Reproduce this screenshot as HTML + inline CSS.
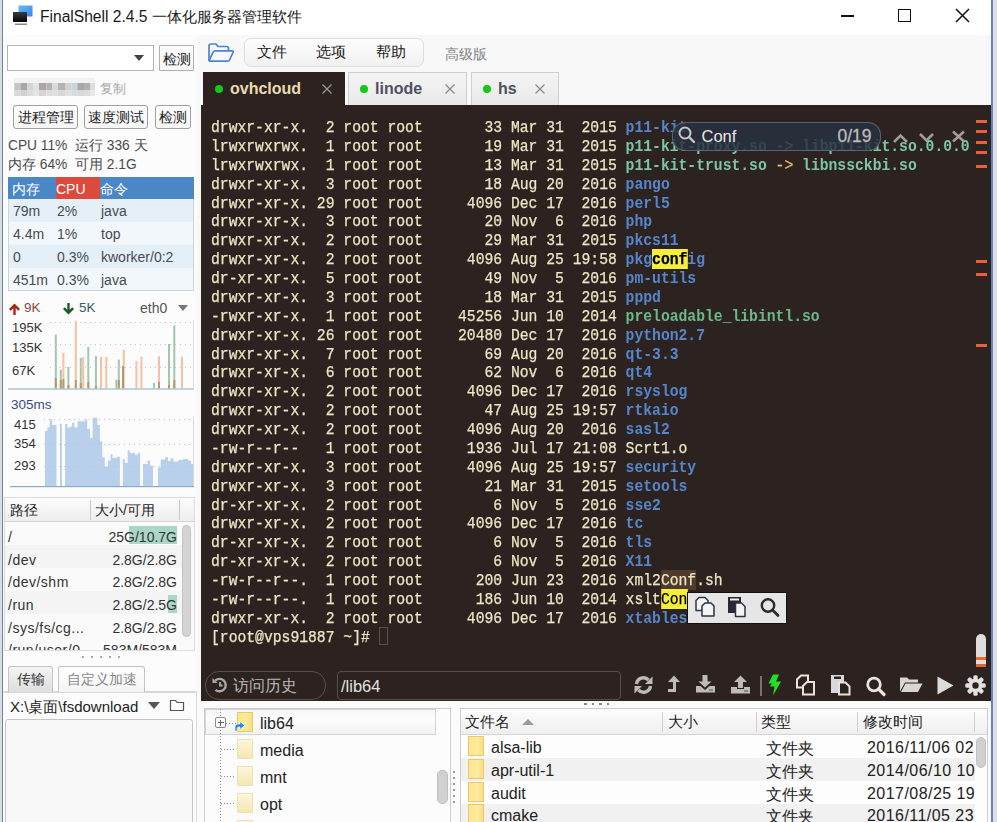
<!DOCTYPE html>
<html><head><meta charset="utf-8">
<style>
*{box-sizing:border-box}
html,body{margin:0;padding:0}
body{width:997px;height:822px;overflow:hidden;position:relative;background:#f8f8f8;font-family:"Liberation Sans",sans-serif;color:#333}
.a{position:absolute}
#title{left:0;top:0;width:997px;height:35px;background:#fff}
#term{left:201px;top:105px;width:790px;height:596px;background:#2c2220}
#tt{left:210.8px;top:119px;transform:scaleX(0.91875);transform-origin:0 0;font-family:"Liberation Mono",monospace;font-size:16px;line-height:18.87px;white-space:pre;color:#eee5c4;-webkit-text-stroke:0.25px currentColor}
.b{color:#5686cc;font-weight:bold;-webkit-text-stroke:0}
.g{color:#6cb888;font-weight:bold;-webkit-text-stroke:0}
.c{color:#7cc6a6;font-weight:bold;-webkit-text-stroke:0}
.ar{color:#e6c07a}
.hy{background:#f5ee3c;color:#000;padding-top:2px}
.hb{background:#4e3b2c;padding-top:2px}

.btn{border:1px solid #a0a0a0;border-radius:3px;background:linear-gradient(#fefefe,#f6f6f6);font-size:14px;color:#222;text-align:center;line-height:23px;white-space:nowrap}
.ptab{left:0;width:200px;height:20px;font-size:14px;color:#474c52}
.ptab span{position:absolute;top:0;white-space:nowrap}

.dk{position:absolute;left:0;width:172px;height:20px;font-size:14px;color:#333;white-space:nowrap}
.dk .l{position:absolute;left:3px;top:0;letter-spacing:.5px}
.dk .r{position:absolute;right:0;top:0}
.tabb{height:26px;border:1px solid #c4c4c4;border-bottom:none;border-radius:3px 3px 0 0;font-size:14px;text-align:center;line-height:24px;white-space:nowrap}

.lbl{font-size:13px;color:#333}
.dot{width:8px;height:8px;border-radius:50%;background:#14c814}
.tabt{top:80px;font-size:16px;font-weight:bold;white-space:nowrap}

.mk{left:976px;width:11px;height:3px;background:#e8603a}
.fold{width:15.5px;height:20px;background:linear-gradient(90deg,#fde68c,#feeaa0 60%,#f9df84);border-radius:0;border:1px solid #ecc968}
.fold.pale{background:linear-gradient(#fdf6dc,#f6e6b0);border-color:#f1e2b4}
.tn{font-size:16px;color:#222;white-space:nowrap}
.hd{top:713px;font-size:15px;color:#222;white-space:nowrap}
.fr{left:0;width:997px;height:20px;font-size:16px;color:#222}
.fr .dt{letter-spacing:.45px}
.fr span{position:absolute;top:0;white-space:nowrap}
</style></head><body>
<div id="title" class="a"></div>
<div class="a" style="left:3px;top:35px;width:194px;height:787px;background:#fcfcfc"></div>
<div class="a" style="left:2px;top:0;width:1px;height:822px;background:#5f86cc"></div>
<div class="a" style="left:0;top:0;width:2px;height:822px;background:#dcdcdc"></div>
<div class="a" style="left:991px;top:0;width:2px;height:822px;background:#5f86cc"></div>
<div class="a" style="left:993px;top:0;width:4px;height:822px;background:#e2dede"></div>


<!-- title bar content -->
<svg class="a" style="left:11px;top:4px" width="24" height="24" viewBox="0 0 24 24">
  <defs><linearGradient id="gb" x1="0" y1="0" x2="1" y2="1"><stop offset="0" stop-color="#6fb6f5"/><stop offset="1" stop-color="#2f8ae8"/></linearGradient>
  <linearGradient id="gm" x1="0" y1="0" x2="0" y2="1"><stop offset="0" stop-color="#3a3a44"/><stop offset="1" stop-color="#050505"/></linearGradient></defs>
  <rect x="7.5" y="1.5" width="14" height="11" fill="url(#gb)"/>
  <rect x="2" y="8" width="14" height="10" fill="url(#gm)"/>
  <rect x="4" y="19.5" width="12" height="1.5" fill="#8a8a8a"/>
</svg>
<div class="a" style="left:40px;top:8px;font-size:15px;color:#1a1a1a;white-space:nowrap"><span style="font-size:15.6px">FinalShell 2.4.5 </span>一体化服务器管理软件</div>
<div class="a" style="left:841px;top:15px;width:13px;height:1.5px;background:#111"></div>
<div class="a" style="left:898px;top:9px;width:13px;height:13px;border:1.3px solid #111"></div>
<svg class="a" style="left:955px;top:8px" width="15" height="15" viewBox="0 0 15 15"><path d="M1 1L14 14M14 1L1 14" stroke="#111" stroke-width="1.5"/></svg>

<!-- left panel -->
<div class="a" style="left:7px;top:44.5px;width:147px;height:26.5px;border:1.5px solid #b4b4b4;background:#fff"></div>
<div class="a" style="left:134px;top:55px;width:0;height:0;border-left:5.5px solid transparent;border-right:5.5px solid transparent;border-top:6px solid #444"></div>
<div class="a btn" style="left:159px;top:44.5px;width:35px;height:26px;line-height:27px;border-radius:1px;border:1.5px solid #b0b0b0">检测</div>
<svg class="a" style="left:14px;top:78px;filter:blur(0.6px)" width="82" height="20" viewBox="0 0 82 20"><rect x="0" y="0" width="81" height="5" fill="#f2f2f2"/><rect x="0.3" y="5" width="6.1" height="7" fill="#c4c4c4"/><rect x="0.3" y="12" width="6.1" height="6" fill="#d8d8d8"/><rect x="6.4" y="5" width="6.6" height="7" fill="#a8a8a4"/><rect x="6.4" y="12" width="6.6" height="6" fill="#d0d0d0"/><rect x="13.0" y="5" width="6.0" height="7" fill="#d4d4d4"/><rect x="13.0" y="12" width="6.0" height="6" fill="#dcdcdc"/><rect x="19.0" y="5" width="6.0" height="7" fill="#e0e4e8"/><rect x="19.0" y="12" width="6.0" height="6" fill="#e4e4e4"/><rect x="25.0" y="5" width="7.4" height="7" fill="#b0a4a8"/><rect x="25.0" y="12" width="7.4" height="6" fill="#d4d4d4"/><rect x="32.4" y="5" width="5.6" height="7" fill="#b4b4b0"/><rect x="32.4" y="12" width="5.6" height="6" fill="#dcdcdc"/><rect x="38.0" y="5" width="6.0" height="7" fill="#d8dadc"/><rect x="38.0" y="12" width="6.0" height="6" fill="#e0e0e0"/><rect x="44.0" y="5" width="7.0" height="7" fill="#b4b4b4"/><rect x="44.0" y="12" width="7.0" height="6" fill="#d8d8d8"/><rect x="51.0" y="5" width="6.7" height="7" fill="#d4d0cc"/><rect x="51.0" y="12" width="6.7" height="6" fill="#e0e0e0"/><rect x="57.7" y="5" width="5.6" height="7" fill="#c8d4e0"/><rect x="57.7" y="12" width="5.6" height="6" fill="#d4dce4"/><rect x="63.3" y="5" width="6.7" height="7" fill="#a8a8a8"/><rect x="63.3" y="12" width="6.7" height="6" fill="#d8d8d8"/><rect x="70.0" y="5" width="6.0" height="7" fill="#b0b0b0"/><rect x="70.0" y="12" width="6.0" height="6" fill="#dcdcdc"/><rect x="76.0" y="5" width="5.0" height="7" fill="#dcdcdc"/><rect x="76.0" y="12" width="5.0" height="6" fill="#e8e8e8"/></svg>
<div class="a" style="left:100px;top:80px;font-size:13px;color:#a8a8a8">复制</div>
<div class="a btn" style="left:13px;top:105px;width:65px;height:24px">进程管理</div>
<div class="a btn" style="left:84px;top:105px;width:64px;height:24px">速度测试</div>
<div class="a btn" style="left:155px;top:105px;width:36px;height:24px">检测</div>
<div class="a" style="left:8px;top:135.5px;font-size:13.75px;color:#4a4a4a;white-space:pre;line-height:19px">CPU 11%  运行 336 天
内存 64%  可用 2.1G</div>
<!-- process table -->
<div class="a" style="left:8px;top:177px;width:186px;height:114px;border:1px solid #c8d4df;background:#f2f7fb"></div>
<div class="a" style="left:8px;top:177px;width:186px;height:22px;background:#4a87c6"></div>
<div class="a" style="left:56px;top:177px;width:44px;height:22px;background:#dc4a3c"></div>
<div class="a" style="left:9px;top:199px;width:184px;height:23px;background:#e5eff8"></div>
<div class="a" style="left:9px;top:245px;width:184px;height:23px;background:#e5eff8"></div>
<div class="a ptab" style="top:181px;color:#fff"><span style="left:12px">内存</span><span style="left:56px">CPU</span><span style="left:100px">命令</span></div>
<div class="a ptab" style="top:202.5px"><span style="left:13px">79m</span><span style="left:57px">2%</span><span style="left:101px">java</span></div>
<div class="a ptab" style="top:225.5px"><span style="left:13px">4.4m</span><span style="left:57px">1%</span><span style="left:101px">top</span></div>
<div class="a ptab" style="top:249px"><span style="left:13px">0</span><span style="left:57px">0.3%</span><span style="left:101px">kworker/0:2</span></div>
<div class="a ptab" style="top:272px"><span style="left:13px">451m</span><span style="left:57px">0.3%</span><span style="left:101px">java</span></div>


<!-- net -->
<svg class="a" style="left:8px;top:302px" width="13" height="13" viewBox="0 0 13 13"><path d="M6.5 1.5L1 7l1.8 1.8 2.5-2.5V13h2.4V6.3l2.5 2.5L12 7z" fill="#a82818"/></svg>
<div class="a" style="left:24px;top:300px;font-size:13.5px;color:#8e4646">9K</div>
<svg class="a" style="left:62px;top:302px" width="13" height="13" viewBox="0 0 13 13"><path d="M6.5 12.5L1 7l1.8-1.8 2.5 2.5V1h2.4v6.7l2.5-2.5L12 7z" fill="#1c5a30"/></svg>
<div class="a" style="left:79px;top:300px;font-size:13.5px;color:#3a5868">5K</div>
<div class="a" style="left:140px;top:299.5px;font-size:14px;color:#555">eth0</div>
<div class="a" style="left:178px;top:305px;width:0;height:0;border-left:5.5px solid transparent;border-right:5.5px solid transparent;border-top:6px solid #777"></div>
<svg class="a" style="left:0;top:0" width="200" height="500" viewBox="0 0 200 500"><rect x="54.8" y="334.5" width="2" height="54.2" fill="#a4c6ac"/><rect x="59.8" y="369.6" width="2" height="19.1" fill="#a4c6ac"/><rect x="67.4" y="367.0" width="2" height="21.7" fill="#a4c6ac"/><rect x="79.8" y="358.0" width="2" height="30.7" fill="#a4c6ac"/><rect x="87.3" y="347.0" width="2" height="41.7" fill="#a4c6ac"/><rect x="94.9" y="356.0" width="2" height="32.7" fill="#a4c6ac"/><rect x="115.4" y="379.7" width="2" height="9.0" fill="#a4c6ac"/><rect x="117.8" y="359.6" width="2" height="29.1" fill="#a4c6ac"/><rect x="153.0" y="383.0" width="2" height="5.7" fill="#a4c6ac"/><rect x="168.0" y="344.0" width="2" height="44.7" fill="#a4c6ac"/><rect x="173.3" y="325.5" width="2" height="63.2" fill="#a4c6ac"/><rect x="62.4" y="352.8" width="2" height="35.9" fill="#f7c0a2"/><rect x="74.8" y="321.0" width="2" height="67.7" fill="#f7c0a2"/><rect x="82.2" y="357.0" width="2" height="31.7" fill="#f7c0a2"/><rect x="100.0" y="356.8" width="2" height="31.9" fill="#f7c0a2"/><rect x="105.3" y="357.0" width="2" height="31.7" fill="#f7c0a2"/><rect x="122.8" y="349.6" width="2" height="39.1" fill="#f7c0a2"/><rect x="135.4" y="361.0" width="2" height="27.7" fill="#f7c0a2"/><rect x="140.4" y="356.8" width="2" height="31.9" fill="#f7c0a2"/><rect x="158.0" y="356.2" width="2" height="32.5" fill="#f7c0a2"/><rect x="181.0" y="356.8" width="2" height="31.9" fill="#f7c0a2"/><rect x="54.8" y="378.0" width="2" height="10.7" fill="#b49a6c"/><rect x="59.8" y="380.0" width="2" height="8.7" fill="#b49a6c"/><rect x="62.4" y="379.0" width="2" height="9.7" fill="#b49a6c"/><rect x="67.4" y="385.0" width="2" height="3.7" fill="#b49a6c"/><rect x="74.8" y="380.0" width="2" height="8.7" fill="#b49a6c"/><rect x="79.8" y="383.0" width="2" height="5.7" fill="#b49a6c"/><rect x="87.3" y="382.0" width="2" height="6.7" fill="#b49a6c"/><rect x="94.9" y="386.0" width="2" height="2.7" fill="#b49a6c"/><rect x="122.0" y="366.0" width="2" height="22.7" fill="#b49a6c"/><rect x="117.8" y="380.0" width="2" height="8.7" fill="#b49a6c"/><rect x="158.0" y="382.0" width="2" height="6.7" fill="#b49a6c"/><rect x="168.0" y="385.0" width="2" height="3.7" fill="#b49a6c"/><rect x="173.3" y="380.0" width="2" height="8.7" fill="#b49a6c"/><path d="M44.9 486.0V430.9H47.3V427.5H49.7V419.2H52.2V425H56.5V486.0ZM60 486.0V424.1H61.9V486.0ZM65.1 486.0V424.1H67.3V427.5H70.2V426.5H72.1V422.7H74.5V427.5H77.5V421.2H85.3V419.2H87.2V429H90.1V437.7H92.6V417.8H97.4V425H99.9V441.6H102.3V457.2H104.7V466.4H108.1V460.6H110.6V454.3H112.5V457.7H116.9V456.7H119.9V486.0ZM122.8 486.0V459.1H124.7V463H127.7V450.4H130.1V453.3H132.5V452.8H135V454.8H137.9V452.8H140.1V486.0ZM143 486.0V464H147.6V460.6H150V465.5H153V486.0ZM158 486.0V467.4H160.7V459.6H165.1V457.2H168V461.1H170.5V458.2H173.4V461.6H178.3V460.1H183.1V459.1H188V460.6H190.9V464H193.3V486.0Z" fill="#b8d0ec"/><rect x="193" y="417" width="1" height="69" fill="#d8d8d8"/><rect x="8" y="388.3" width="186" height="1.4" fill="#a9c3cf"/><rect x="10" y="486" width="184" height="1.2" fill="#8fa8c4"/><rect x="193" y="320" width="1" height="69" fill="#dde"/><g stroke="#c4c4c4" stroke-width="1" stroke-dasharray="1 4"><line x1="50" y1="322.5" x2="194" y2="322.5"/><line x1="50" y1="344.5" x2="194" y2="344.5"/><line x1="50" y1="367.5" x2="194" y2="367.5"/><line x1="44" y1="419.5" x2="194" y2="419.5"/><line x1="44" y1="444.5" x2="194" y2="444.5"/><line x1="44" y1="466.5" x2="194" y2="466.5"/></g></svg>
<div class="a lbl" style="left:12px;top:320px">195K</div><div class="a lbl" style="left:12px;top:340px">135K</div><div class="a lbl" style="left:12px;top:363px">67K</div>
<div class="a" style="left:11px;top:397px;font-size:13.5px;color:#3a4a86">305ms</div>
<div class="a lbl" style="left:14px;top:417px">415</div><div class="a lbl" style="left:14px;top:436px">354</div><div class="a lbl" style="left:14px;top:458px">293</div>
<!-- disk table -->
<div class="a" style="left:4px;top:497px;width:191px;height:154px;border:1px solid #dcdcdc;background:#fafafa"></div>
<div class="a" style="left:5px;top:498px;width:189px;height:24px;background:linear-gradient(#fbfbfb,#eeeeee);border-bottom:1px solid #d6d6d6"></div>
<div class="a" style="left:90px;top:500px;width:1px;height:20px;background:#c9c9c9"></div>
<div class="a" style="left:179px;top:500px;width:1px;height:20px;background:#c9c9c9"></div>
<div class="a" style="left:10px;top:502px;font-size:14px;color:#222">路径</div>
<div class="a" style="left:95px;top:502px;font-size:14px;color:#222">大小/可用</div>
<div class="a" style="left:5px;top:545px;width:177px;height:23px;background:#f4f4f4"></div>
<div class="a" style="left:5px;top:591px;width:177px;height:23px;background:#f4f4f4"></div>
<div class="a" style="left:129px;top:526px;width:48px;height:18px;background:#a9d6c6"></div>
<div class="a" style="left:168px;top:595px;width:9px;height:18px;background:#a9d6c6"></div>
<div class="a" style="left:182px;top:525px;width:9px;height:112px;border-radius:5px;background:#d4d4d4;border:1px solid #c4c4c4"></div>
<div class="a" style="left:5px;top:522px;width:176px;height:128px;overflow:hidden"><div style="position:absolute;left:0;top:1.5px;width:176px;height:128px">
 <div class="dk" style="top:5px"><span class="l">/</span><span class="r">25G/10.7G</span></div>
 <div class="dk" style="top:28px"><span class="l">/dev</span><span class="r">2.8G/2.8G</span></div>
 <div class="dk" style="top:50px"><span class="l">/dev/shm</span><span class="r">2.8G/2.8G</span></div>
 <div class="dk" style="top:73px"><span class="l">/run</span><span class="r">2.8G/2.5G</span></div>
 <div class="dk" style="top:96px"><span class="l">/sys/fs/cg...</span><span class="r">2.8G/2.8G</span></div>
 <div class="dk" style="top:118px"><span class="l">/run/user/0</span><span class="r">583M/583M</span></div>
</div></div>
<div class="a" style="left:82px;top:656px;width:40px;height:2px;background:repeating-linear-gradient(90deg,#aaa 0 2px,transparent 2px 9px)"></div>
<!-- transfer tabs -->
<div class="a" style="left:3px;top:691px;width:194px;height:2px;background:#d8d8d8"></div>
<div class="a" style="left:196px;top:692px;width:1px;height:130px;background:#dcdcdc"></div>
<div class="a tabb" style="left:8px;top:666px;width:45px;background:linear-gradient(#f4f4f4,#dedede);color:#333">传输</div>
<div class="a tabb" style="left:58px;top:666px;width:87px;background:linear-gradient(#fefefe,#f4f4f4);color:#888">自定义加速</div>
<div class="a" style="left:10px;top:697.5px;font-size:15px;color:#222;white-space:nowrap">X:\桌面\fsdownload</div>
<div class="a" style="left:148px;top:702px;width:0;height:0;border-left:6px solid transparent;border-right:6px solid transparent;border-top:7px solid #555"></div>
<svg class="a" style="left:169px;top:698px" width="16" height="14" viewBox="0 0 16 14"><path d="M1.5 2.5h5l1.5 2h6.5v8h-13z" fill="none" stroke="#555" stroke-width="1.2"/></svg>
<div class="a" style="left:5px;top:719px;width:188px;height:110px;border:1px solid #c6c6c6;border-radius:3px;background:#f8f8f8"></div>


<!-- toolbar -->
<svg class="a" style="left:207px;top:42px" width="28" height="22" viewBox="0 0 28 22"><path d="M2 18.5V4q0-2 2-2h5l2 2.5h8.5q2 0 2 2v2.2" fill="none" stroke="#4a84d8" stroke-width="1.7" stroke-linejoin="round"/><path d="M2 18.5l4.3-8.6q.5-1.1 1.8-1.1H25q1.8 0 1.1 1.6L22.5 18q-.5 1.1-1.7 1.1H2.6z" fill="none" stroke="#4a84d8" stroke-width="1.7" stroke-linejoin="round"/></svg>
<div class="a" style="left:244px;top:38px;width:180px;height:29px;border:1px solid #dedede;border-radius:7px;background:linear-gradient(#fdfdfd,#f1f1f1)"></div>
<div class="a" style="left:257px;top:43px;font-size:15px;color:#222">文件</div>
<div class="a" style="left:316px;top:43px;font-size:15px;color:#222">选项</div>
<div class="a" style="left:376px;top:43px;font-size:15px;color:#222">帮助</div>
<div class="a" style="left:445px;top:45.5px;font-size:14px;color:#828282">高级版</div>
<!-- tabs -->
<div class="a" style="left:203px;top:72px;width:142px;height:34px;background:#2c2220"></div>
<div class="a" style="left:348px;top:72px;width:119px;height:33px;background:linear-gradient(#f4f4f4,#e9e9e9);border:1px solid #cfcfcf;border-bottom:none"></div>
<div class="a" style="left:471px;top:72px;width:88px;height:33px;background:linear-gradient(#f4f4f4,#e9e9e9);border:1px solid #cfcfcf;border-bottom:none"></div>
<div class="a dot" style="left:214.5px;top:84.5px"></div>
<div class="a dot" style="left:360px;top:84.5px"></div>
<div class="a dot" style="left:482.5px;top:84.5px"></div>
<div class="a tabt" style="left:230px;color:#eadbb0">ovhcloud</div>
<div class="a tabt" style="left:375px;color:#4f5060">linode</div>
<div class="a tabt" style="left:498px;color:#4f5060">hs</div>
<svg class="a" style="left:322px;top:84px" width="10" height="10" viewBox="0 0 10 10"><path d="M.5.5l9 9M9.5.5l-9 9" stroke="#9a9a9a" stroke-width="1.2"/></svg>
<svg class="a" style="left:445px;top:84px" width="10" height="10" viewBox="0 0 10 10"><path d="M.5.5l9 9M9.5.5l-9 9" stroke="#888" stroke-width="1.2"/></svg>
<svg class="a" style="left:535px;top:84px" width="10" height="10" viewBox="0 0 10 10"><path d="M.5.5l9 9M9.5.5l-9 9" stroke="#888" stroke-width="1.2"/></svg>

<div id="term" class="a"></div>
<div id="tt" class="a">drwxr-xr-x.  2 root root       33 Mar 31  2015 <span class="b">p11-kit</span>
lrwxrwxrwx.  1 root root       19 Mar 31  2015 <span class="c">p11-kit-proxy.so</span> <span class="ar">-></span> <span class="c">libp11-kit.so.0.0.0</span>
lrwxrwxrwx.  1 root root       13 Mar 31  2015 <span class="c">p11-kit-trust.so</span> <span class="ar">-></span> <span class="c">libnssckbi.so</span>
drwxr-xr-x.  3 root root       18 Aug 20  2016 <span class="b">pango</span>
drwxr-xr-x. 29 root root     4096 Dec 17  2016 <span class="b">perl5</span>
drwxr-xr-x.  3 root root       20 Nov  6  2016 <span class="b">php</span>
drwxr-xr-x.  2 root root       29 Mar 31  2015 <span class="b">pkcs11</span>
drwxr-xr-x.  2 root root     4096 Aug 25 19:58 <span class="b">pkg</span><span class="hy" style="font-weight:bold">conf</span><span class="b">ig</span>
dr-xr-xr-x.  5 root root       49 Nov  5  2016 <span class="b">pm-utils</span>
drwxr-xr-x.  3 root root       18 Mar 31  2015 <span class="b">pppd</span>
-rwxr-xr-x.  1 root root    45256 Jun 10  2014 <span class="g">preloadable_libintl.so</span>
drwxr-xr-x. 26 root root    20480 Dec 17  2016 <span class="b">python2.7</span>
drwxr-xr-x.  7 root root       69 Aug 20  2016 <span class="b">qt-3.3</span>
drwxr-xr-x.  6 root root       62 Nov  6  2016 <span class="b">qt4</span>
drwxr-xr-x.  2 root root     4096 Dec 17  2016 <span class="b">rsyslog</span>
drwxr-xr-x.  2 root root       47 Aug 25 19:57 <span class="b">rtkaio</span>
drwxr-xr-x.  2 root root     4096 Aug 20  2016 <span class="b">sasl2</span>
-rw-r--r--   1 root root     1936 Jul 17 21:08 Scrt1.o
drwxr-xr-x.  3 root root     4096 Aug 25 19:57 <span class="b">security</span>
drwxr-xr-x.  3 root root       21 Mar 31  2015 <span class="b">setools</span>
dr-xr-xr-x.  2 root root        6 Nov  5  2016 <span class="b">sse2</span>
drwxr-xr-x.  2 root root     4096 Dec 17  2016 <span class="b">tc</span>
dr-xr-xr-x.  2 root root        6 Nov  5  2016 <span class="b">tls</span>
dr-xr-xr-x.  2 root root        6 Nov  5  2016 <span class="b">X11</span>
-rw-r--r--.  1 root root      200 Jun 23  2016 xml2<span class="hb">Conf</span>.sh
-rw-r--r--.  1 root root      186 Jun 10  2014 xslt<span class="hy">Con</span>f.sh
drwxr-xr-x.  2 root root     4096 Dec 17  2016 <span class="b">xtables</span>
[root@vps91887 ~]# </div>

<!-- find bar -->
<div class="a" style="left:672px;top:121.5px;width:209px;height:29px;border-radius:13px;background:rgba(40,50,64,0.86);border:1px solid rgba(100,112,130,0.8)"></div>
<svg class="a" style="left:677px;top:125px" width="20" height="20" viewBox="0 0 20 20"><circle cx="8" cy="8" r="5.5" fill="none" stroke="#c8c8c8" stroke-width="2"/><path d="M12 12l5 5" stroke="#c8c8c8" stroke-width="2.4" stroke-linecap="round"/></svg>
<div class="a" style="left:701.5px;top:126.5px;font-size:16.5px;color:#e8e8e8">Conf</div>
<div class="a" style="left:837.5px;top:126px;font-size:17.5px;color:#bdbdbd;-webkit-text-stroke:.3px #bdbdbd">0/19</div>
<svg class="a" style="left:892px;top:131.5px" width="17" height="12" viewBox="0 0 17 12"><path d="M2 10L8.5 3.5 15 10" fill="none" stroke="#a29c9a" stroke-width="2.6"/></svg>
<svg class="a" style="left:918px;top:131.5px" width="17" height="12" viewBox="0 0 17 12"><path d="M2 2l6.5 6.5L15 2" fill="none" stroke="#a29c9a" stroke-width="2.6"/></svg>
<svg class="a" style="left:951px;top:130px" width="15" height="13" viewBox="0 0 15 13"><path d="M2 1.5l11 10M13 1.5l-11 10" stroke="#a29c9a" stroke-width="2.6"/></svg>
<!-- scroll markers -->
<div class="a mk" style="top:120px"></div><div class="a mk" style="top:130px"></div><div class="a mk" style="top:141px"></div><div class="a mk" style="top:151px"></div><div class="a mk" style="top:165px"></div>
<div class="a mk" style="top:260px"></div><div class="a mk" style="top:273px"></div><div class="a mk" style="top:344px"></div>
<!-- terminal scrollbar thumb -->
<div class="a" style="left:976px;top:634px;width:10px;height:33px;border-radius:5px 5px 0 0;background:#dedede"></div>
<div class="a" style="left:976px;top:657px;width:10px;height:2.5px;background:#f06a30"></div>
<div class="a" style="left:976px;top:663.5px;width:10px;height:3.5px;background:#e8602a"></div>
<!-- cursor -->
<div class="a" style="left:378.5px;top:627px;width:9px;height:18px;border:1px solid #5e4e44"></div>
<!-- context popup -->
<div class="a" style="left:687px;top:591.5px;width:100px;height:32.5px;background:#e6e6e6;border:1px solid #111"></div>
<svg class="a" style="left:694px;top:596px" width="24" height="22" viewBox="0 0 24 22"><path d="M5 1.5h6l3 3v10H2v-10z" fill="#f4f4f4" stroke="#2a3548" stroke-width="1.5" stroke-linejoin="round"/><path d="M11 7h6l3 3v10H8V10z" fill="#f4f4f4" stroke="#2a3548" stroke-width="1.5" stroke-linejoin="round"/></svg>
<svg class="a" style="left:726px;top:596px" width="24" height="22" viewBox="0 0 24 22"><path d="M2 1h13v16H2z" fill="#2a2a30"/><path d="M4 2.5h9v2H4z" fill="#eee"/><path d="M9.5 7h6l3.5 3.5V20.5H9.5z" fill="#f4f4f4" stroke="#2a3548" stroke-width="1.5" stroke-linejoin="round"/></svg>
<svg class="a" style="left:759px;top:597px" width="22" height="21" viewBox="0 0 22 21"><circle cx="9" cy="8.5" r="6.2" fill="none" stroke="#2b2b2b" stroke-width="2.4"/><path d="M13.5 13l5.5 5.5" stroke="#2b2b2b" stroke-width="2.8" stroke-linecap="round"/></svg>
<!-- terminal bottom bar -->
<div class="a" style="left:205px;top:671px;width:121px;height:29px;border:1px solid #5a4e4a;border-radius:14px"></div>
<svg class="a" style="left:211px;top:676px" width="18" height="18" viewBox="0 0 18 18"><path d="M4.2 4.6A6.2 6.2 0 1 1 4.5 13.8" fill="none" stroke="#a8a8a8" stroke-width="2.4"/><path d="M1.5 2v5h5z" fill="#a8a8a8"/><path d="M9 6v3.5h2.5" fill="none" stroke="#a8a8a8" stroke-width="1.8"/></svg>
<div class="a" style="left:233px;top:676px;font-size:15.5px;color:#b9b9b9">访问历史</div>
<div class="a" style="left:337px;top:671px;width:284px;height:29px;border:1px solid #5a4e4a;border-radius:4px"></div>
<div class="a" style="left:341px;top:677px;font-size:16.5px;color:#e2e2e2">/lib64</div>

<svg class="a" style="left:633px;top:675px" width="21" height="20" viewBox="0 0 21 20"><path d="M3.5 9A7 7 0 0 1 15.5 5M17.5 11A7 7 0 0 1 5.5 15" fill="none" stroke="#bdbab8" stroke-width="3.4"/><path d="M19.5 1.5v7.5h-7.5z" fill="#bdbab8"/><path d="M1.5 18.5v-7.5h7.5z" fill="#bdbab8"/></svg>
<svg class="a" style="left:667px;top:675px" width="15" height="19" viewBox="0 0 15 19"><path d="M7 .5l6 6.5H9V17H1v-3h5V7H1z" fill="#bdbab8"/></svg>
<svg class="a" style="left:695px;top:674px" width="21" height="20" viewBox="0 0 21 20"><path d="M7.5 1h5v6.5h4l-6.5 6-6.5-6h4z" fill="#bdbab8"/><path d="M1 12h4.5l4.5 4 4.5-4H20v6.5H1z" fill="#bdbab8"/><path d="M14 16h4" stroke="#5a5250" stroke-width="1"/></svg>
<svg class="a" style="left:730px;top:675px" width="21" height="20" viewBox="0 0 21 20"><path d="M10.5 .5l6.5 6.5h-4v6h-5V7h-4z" fill="#bdbab8"/><path d="M1 12h6v2h7v-2h6v6.5H1z" fill="#bdbab8"/><path d="M14 16h4" stroke="#5a5250" stroke-width="1"/></svg>
<div class="a" style="left:760px;top:676px;width:2px;height:20px;background:#7a706c"></div>
<svg class="a" style="left:767px;top:674px" width="15" height="22" viewBox="0 0 15 22"><path d="M6 .5h6L9 7.5h5L6 21.5l1.5-9H3l2-3H1.5z" fill="#22e022"/></svg>
<svg class="a" style="left:795px;top:674px" width="23" height="22" viewBox="0 0 23 22"><path d="M6 1.5h7v12H2V5.5z" fill="none" stroke="#e8e4dc" stroke-width="2"/><path d="M12 8h7v12.5H8V12z" fill="#2c2220" stroke="#e8e4dc" stroke-width="2"/></svg>
<svg class="a" style="left:830px;top:674px" width="22" height="22" viewBox="0 0 22 22"><path d="M1 1h13v18H1z" fill="#d8d8dc"/><path d="M4 2.5h7v2.5H4z" fill="#2c2220"/><path d="M9 8.5h6.5l4 4v8H9z" fill="#2c2220" stroke="#e8e4dc" stroke-width="2"/></svg>
<svg class="a" style="left:865px;top:676px" width="22" height="21" viewBox="0 0 22 21"><circle cx="9" cy="8.5" r="6.3" fill="none" stroke="#e8e4e0" stroke-width="2.8"/><path d="M13.5 13l5.5 5.5" stroke="#e8e4e0" stroke-width="3.2" stroke-linecap="round"/></svg>
<svg class="a" style="left:899px;top:676px" width="24" height="17" viewBox="0 0 24 17"><path d="M1 15.5V1.5h7l2 2h9v3H6z" fill="#d8d6d2"/><path d="M2 16l4.5-8.5h17L19 16z" fill="#d8d6d2"/></svg>
<svg class="a" style="left:937px;top:676px" width="17" height="19" viewBox="0 0 17 19"><path d="M.5 .5l16 9-16 9z" fill="#dcdcdc"/></svg>
<svg class="a" style="left:965px;top:675px" width="21" height="21" viewBox="0 0 21 21"><g fill="#e0e0e0"><circle cx="10.5" cy="10.5" r="6.8"/><rect x="8.3" y="0.3" width="4.4" height="20.4" rx="1.5"/><rect x="0.3" y="8.3" width="20.4" height="4.4" rx="1.5"/><rect x="8.3" y="0.3" width="4.4" height="20.4" rx="1.5" transform="rotate(45 10.5 10.5)"/><rect x="8.3" y="0.3" width="4.4" height="20.4" rx="1.5" transform="rotate(-45 10.5 10.5)"/></g><circle cx="10.5" cy="10.5" r="3.2" fill="#2c2220"/></svg>
<!-- file browser -->
<div class="a" style="left:197px;top:701px;width:794px;height:121px;background:#fbfbfb"></div>
<div class="a" style="left:584px;top:702.5px;width:26px;height:2px;background:repeating-linear-gradient(90deg,#8a8a8a 0 2.5px,transparent 2.5px 7.5px)"></div>
<div class="a" style="left:204px;top:708px;width:247px;height:120px;border:1px solid #cdcdcd;background:#fcfcfc"></div>
<div class="a" style="left:205px;top:709px;width:231px;height:26px;background:linear-gradient(#f6f6f6,#fdfdfd 40%,#f2f2f2);border:1px solid #d4d4d4"></div>
<div class="a" style="left:220px;top:709px;width:1px;height:113px;background:repeating-linear-gradient(#888 0 1px,transparent 1px 3px)"></div>
<div class="a" style="left:215px;top:717px;width:11px;height:11px;border:1.5px solid #8a8a8a;border-radius:2px;background:#fafafa"></div>
<div class="a" style="left:217.5px;top:722px;width:6px;height:1.4px;background:#666"></div>
<div class="a" style="left:219.8px;top:719.5px;width:1.4px;height:6px;background:#666"></div>
<div class="a" style="left:226px;top:722.5px;width:10px;height:1px;background:repeating-linear-gradient(90deg,#888 0 1px,transparent 1px 3px)"></div>
<div class="a" style="left:221px;top:749px;width:15px;height:1px;background:repeating-linear-gradient(90deg,#888 0 1px,transparent 1px 3px)"></div>
<div class="a" style="left:221px;top:776px;width:15px;height:1px;background:repeating-linear-gradient(90deg,#888 0 1px,transparent 1px 3px)"></div>
<div class="a" style="left:221px;top:803px;width:15px;height:1px;background:repeating-linear-gradient(90deg,#888 0 1px,transparent 1px 3px)"></div>
<div class="a fold" style="left:237px;top:712px"></div>
<svg class="a" style="left:234px;top:721px" width="11" height="11" viewBox="0 0 11 11"><path d="M1 10V6q0-3 3-3h2V0.5l4.5 4-4.5 4V6H4.5Q3 6 3 8v2z" fill="#1e88e5" stroke="#fff" stroke-width=".6"/></svg>
<div class="a fold pale" style="left:237px;top:739px"></div>
<div class="a fold pale" style="left:237px;top:766px"></div>
<div class="a fold pale" style="left:237px;top:793px"></div>
<div class="a fold pale" style="left:237px;top:820px"></div>
<div class="a tn" style="left:260px;top:714.5px">lib64</div>
<div class="a tn" style="left:260px;top:741.5px">media</div>
<div class="a tn" style="left:260px;top:768.5px">mnt</div>
<div class="a tn" style="left:260px;top:795.5px">opt</div>
<div class="a" style="left:437px;top:770px;width:11px;height:34px;border-radius:5px;background:#d0d0d0;border:1px solid #c0c0c0"></div>
<div class="a" style="left:453px;top:771px;width:2px;height:34px;background:repeating-linear-gradient(#999 0 2px,transparent 2px 6px)"></div>
<div class="a" style="left:460px;top:708px;width:528px;height:120px;border:1px solid #cdcdcd;background:#fdfdfd"></div>
<div class="a" style="left:461px;top:709px;width:526px;height:26px;background:linear-gradient(#fdfdfd,#efefef);border-bottom:1px solid #d6d6d6"></div>
<div class="a" style="left:662px;top:712px;width:1px;height:20px;background:#cfcfcf"></div>
<div class="a" style="left:756px;top:712px;width:1px;height:20px;background:#cfcfcf"></div>
<div class="a" style="left:857px;top:712px;width:1px;height:20px;background:#cfcfcf"></div>
<div class="a" style="left:974px;top:712px;width:1px;height:20px;background:#cfcfcf"></div>
<div class="a hd" style="left:465px">文件名</div>
<div class="a" style="left:522px;top:719px;width:0;height:0;border-left:6px solid transparent;border-right:6px solid transparent;border-bottom:6px solid #9a9a9a"></div>
<div class="a hd" style="left:668px">大小</div>
<div class="a hd" style="left:761px">类型</div>
<div class="a hd" style="left:863px">修改时间</div>
<div class="a" style="left:461px;top:758px;width:514px;height:23px;background:#f1f1f1"></div>
<div class="a" style="left:461px;top:804px;width:514px;height:23px;background:#f1f1f1"></div>
<div class="a fold" style="left:468px;top:736px"></div>
<div class="a fold" style="left:468px;top:759px"></div>
<div class="a fold" style="left:468px;top:781.5px"></div>
<div class="a fold" style="left:468px;top:804px"></div>
<div class="a fr" style="top:739px"><span style="left:491px">alsa-lib</span><span style="left:766px">文件夹</span><span class="dt" style="left:867px">2016/11/06 02</span></div>
<div class="a fr" style="top:762px"><span style="left:491px">apr-util-1</span><span style="left:766px">文件夹</span><span class="dt" style="left:867px">2014/06/10 10</span></div>
<div class="a fr" style="top:784.5px"><span style="left:491px">audit</span><span style="left:766px">文件夹</span><span class="dt" style="left:867px">2017/08/25 19</span></div>
<div class="a fr" style="top:807px"><span style="left:491px">cmake</span><span style="left:766px">文件夹</span><span class="dt" style="left:867px">2016/11/05 23</span></div>
<div class="a" style="left:976px;top:737px;width:10px;height:31px;border-radius:5px;background:#d0d0d0;border:1px solid #c2c2c2"></div>
</body></html>
